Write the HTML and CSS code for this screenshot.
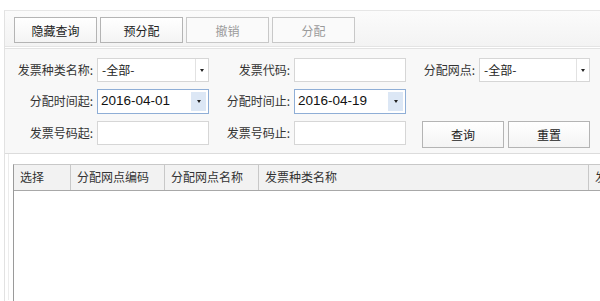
FILE: index.html
```html
<!DOCTYPE html>
<html lang="zh">
<head>
<meta charset="utf-8">
<link rel="stylesheet" href="styles.css">
</head>
<body>
<div class="frame">
  <div class="toolbar">
    <button class="btn">隐藏查询</button>
    <button class="btn">预分配</button>
    <button class="btn disabled">撤销</button>
    <button class="btn disabled">分配</button>
  </div>
  <div class="query">
    <div class="qgrid">
      <div class="lbl">发票种类名称:</div>
      <div class="sel"><span class="val">-全部-</span><span class="arrow"><i class="tri"></i></span></div>
      <div class="lbl">发票代码:</div>
      <div class="inp"></div>
      <div class="lbl">分配网点:</div>
      <div class="sel"><span class="val">-全部-</span><span class="arrow"><i class="tri"></i></span></div>

      <div class="lbl">分配时间起:</div>
      <div class="sel date"><span class="val num">2016-04-01</span><span class="arrow"><i class="tri"></i></span></div>
      <div class="lbl">分配时间止:</div>
      <div class="sel date"><span class="val num">2016-04-19</span><span class="arrow"><i class="tri"></i></span></div>
      <div></div>
      <div></div>

      <div class="lbl">发票号码起:</div>
      <div class="inp"></div>
      <div class="lbl">发票号码止:</div>
      <div class="inp"></div>
      <div class="qbtns">
        <button class="btn">查询</button>
        <button class="btn">重置</button>
      </div>
    </div>
  </div>
  <div class="gridwrap">
    <div class="grid">
      <div class="ghead">
        <div class="gc c1">选择</div>
        <div class="gc c2">分配网点编码</div>
        <div class="gc c3">分配网点名称</div>
        <div class="gc c4">发票种类名称</div>
        <div class="gc c5">发票数量</div>
      </div>
      <div class="gbody"></div>
    </div>
  </div>
</div>
</body>
</html>
```
FILE: styles.css
```css
html, body {
  margin: 0;
  padding: 0;
  background: #ffffff;
  height: 301px;
  overflow: hidden;
}
body {
  font-family: "Noto Sans CJK SC", "Liberation Sans", sans-serif;
  font-size: 12px;
  color: #333333;
}
.frame {
  margin-top: 10px;
  margin-left: 4px;
  border-left: 1px solid #e2e2e2;
  border-top: 1px solid #e6e6e6;
  height: 290px;
}
.toolbar {
  height: 36px;
  box-sizing: border-box;
  padding: 6px 0 0 9px;
  display: flex;
  gap: 3px;
  background: linear-gradient(#fbfbfb, #f3f3f3);
  border-bottom: 1px solid #e4e4e4;
}
.btn {
  width: 83px;
  height: 26px;
  box-sizing: border-box;
  border: 1px solid #b4b4b4;
  background: linear-gradient(#ffffff, #f4f4f4);
  font-family: "Noto Sans CJK SC", "Liberation Sans", sans-serif;
  font-size: 12px;
  color: #222222;
  padding: 0;
  margin: 0;
}
.btn.disabled {
  color: #9a9a9a;
  border-color: #c8c8c8;
  background: #fafafa;
}
.query {
  margin-top: 1px;
  height: 106px;
  box-sizing: border-box;
  background: #f8f8f8;
  border-top: 1px solid #e2e2e2;
  border-bottom: 1px solid #dcdcdc;
  padding-top: 9px;
}
.qgrid {
  display: grid;
  grid-template-columns: 92px 112px 85px 112px 73px 111px;
  grid-template-rows: 24px 25px 25px;
  row-gap: 7px;
}
.lbl {
  text-align: right;
  padding-right: 4px;
  line-height: 24px;
  color: #333333;
  white-space: nowrap;
}
.sel, .inp {
  box-sizing: border-box;
  height: 24px;
  background: #ffffff;
  border: 1px solid #d6d6d6;
  display: flex;
}
.sel .val {
  flex: 1;
  padding-left: 4px;
  line-height: 22px;
  color: #222222;
}
.sel .num {
  font-family: "Liberation Sans", sans-serif;
  font-size: 13.5px;
  color: #111111;
  padding-left: 3px;
}
.arrow {
  width: 12px;
  border-left: 1px solid #e2e2e2;
  display: flex;
  align-items: center;
  justify-content: center;
}
.tri {
  width: 0;
  height: 0;
  border-left: 2.5px solid transparent;
  border-right: 2.5px solid transparent;
  border-top: 3px solid #222222;
}
.sel.date {
  height: 25px;
  border-color: #8faed6;
}
.sel.date .arrow {
  width: 15px;
  margin: 2px 2px 2px 0;
  border-left: none;
  background: #dce7f5;
}
.qbtns {
  grid-column: 5 / span 2;
  display: flex;
  gap: 4px;
  padding-left: 16px;
}
.qbtns .btn {
  height: 27px;
}
.gridwrap {
  margin-left: 3px;
  border-left: 1px solid #ececec;
  padding-left: 4px;
  padding-top: 10px;
  height: 136px;
}
.grid {
  border-left: 1px solid #9a9a9a;
  border-top: 1px solid #c8c8c8;
  height: 100%;
  overflow: hidden;
}
.ghead {
  display: flex;
  height: 25px;
  background: #f2f2f2;
  border-bottom: 1px solid #a8a8a8;
  white-space: nowrap;
}
.gc {
  flex: none;
  box-sizing: border-box;
  line-height: 24px;
  padding-left: 6px;
  border-right: 1px solid #c8c8c8;
  color: #333333;
}
.c1 { width: 57px; }
.c2 { width: 94px; }
.c3 { width: 94px; }
.c4 { width: 330px; }
.c5 { width: 120px; }
.gbody {
  background: #ffffff;
}
```
